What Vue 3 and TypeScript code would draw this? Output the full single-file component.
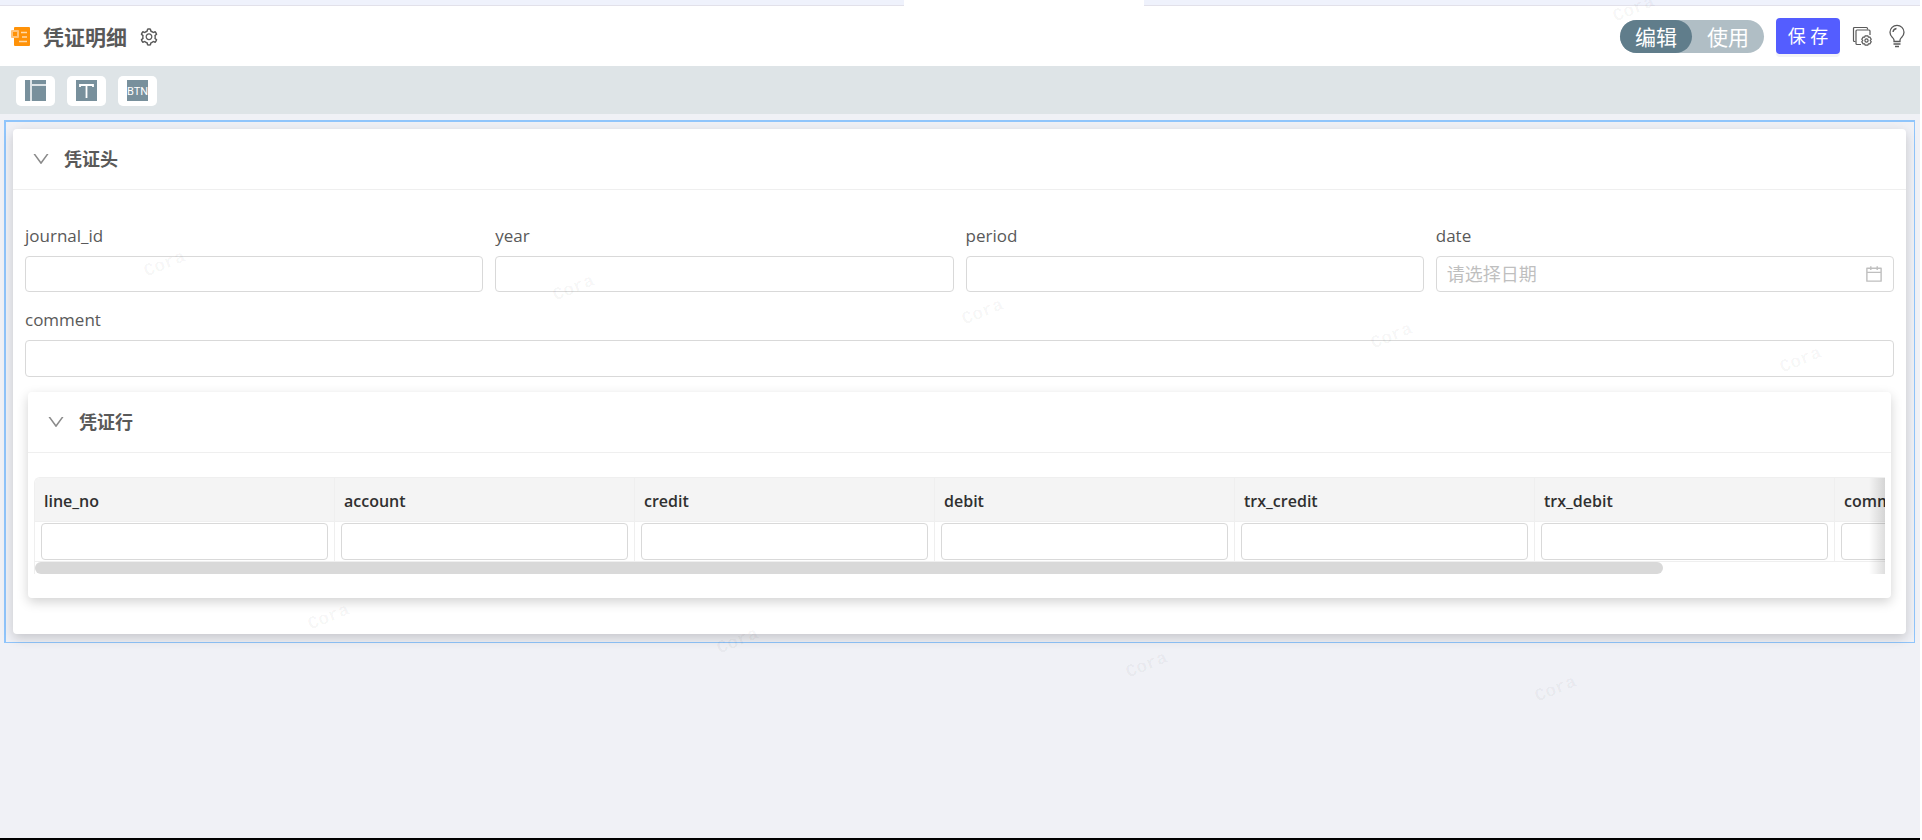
<script setup lang="ts">
import { ref } from 'vue'

interface Field {
  name: string
  kind: 'text' | 'date'
  wide?: boolean
}

interface Mark {
  left: number
  top: number
}

const fields: Field[] = [
  { name: 'journal_id', kind: 'text' },
  { name: 'year', kind: 'text' },
  { name: 'period', kind: 'text' },
  { name: 'date', kind: 'date' },
  { name: 'comment', kind: 'text', wide: true },
]

const columns: string[] = [
  'line_no',
  'account',
  'credit',
  'debit',
  'trx_credit',
  'trx_debit',
  'comment',
]

const mode = ref<'edit' | 'use'>('edit')

const markRow = (left: number, top: number, count: number): Mark[] =>
  Array.from({ length: count }, (_, i) => ({ left: left + i * 409, top: top + i * 24 }))

const marks: Mark[] = [
  ...markRow(1612, -1, 1),
  ...markRow(143, 254, 5),
  ...markRow(307, 607, 4),
]

const gearPath =
  'M924.8 625.7l-65.5-56c3.1-19 4.7-38.4 4.7-57.8s-1.6-38.8-4.7-57.8l65.5-56a32.03 32.03 0 009.3-35.2l-.9-2.6a443.74 443.74 0 00-79.7-137.9l-1.8-2.1a32.12 32.12 0 00-35.1-9.5l-81.3 28.9c-30-24.6-63.5-44-99.7-57.6l-15.7-85a32.05 32.05 0 00-25.8-25.7l-2.7-.5c-52.1-9.4-106.9-9.4-159 0l-2.7.5a32.05 32.05 0 00-25.8 25.7l-15.8 85.4a351.86 351.86 0 00-99 57.4l-81.9-29.1a32 32 0 00-35.1 9.5l-1.8 2.1a446.02 446.02 0 00-79.7 137.9l-.9 2.6c-4.5 12.5-.8 26.5 9.3 35.2l66.3 56.6c-3.1 18.8-4.6 38-4.6 57.1 0 19.2 1.5 38.4 4.6 57.1L99 625.5a32.03 32.03 0 00-9.3 35.2l.9 2.6c18.1 50.4 44.9 96.9 79.7 137.9l1.8 2.1a32.12 32.12 0 0035.1 9.5l81.9-29.1c29.8 24.5 63.1 43.9 99 57.4l15.8 85.4a32.05 32.05 0 0025.8 25.7l2.7.5a449.4 449.4 0 00159 0l2.7-.5a32.05 32.05 0 0025.8-25.7l15.7-85a350 350 0 0099.7-57.6l81.3 28.9a32 32 0 0035.1-9.5l1.8-2.1c34.8-41.1 61.6-87.5 79.7-137.9l.9-2.6c4.5-12.3.8-26.3-9.3-35zM788.3 465.9c2.5 15.1 3.8 30.6 3.8 46.1s-1.3 31-3.8 46.1l-6.6 40.1 74.7 63.9a370.03 370.03 0 01-42.6 73.6L721 702.8l-31.4 25.8c-23.9 19.6-50.5 35-79.3 45.8l-38.1 14.3-17.9 97a377.5 377.5 0 01-85 0l-17.9-97.2-37.8-14.5c-28.5-10.8-55-26.2-78.7-45.7l-31.4-25.9-93.4 33.2c-17-22.9-31.2-47.6-42.6-73.6l75.5-64.5-6.5-40c-2.4-14.9-3.7-30.3-3.7-45.5 0-15.3 1.2-30.6 3.7-45.5l6.5-40-75.5-64.5c11.3-26.1 25.6-50.7 42.6-73.6l93.4 33.2 31.4-25.9c23.7-19.5 50.2-34.9 78.7-45.7l37.9-14.3 17.9-97.2c28.1-3.2 56.8-3.2 85 0l17.9 97 38.1 14.3c28.7 10.8 55.4 26.2 79.3 45.8l31.4 25.8 92.8-32.9c17 22.9 31.2 47.6 42.6 73.6L781.8 426l6.5 39.9zM512 326c-97.2 0-176 78.8-176 176s78.8 176 176 176 176-78.8 176-176-78.8-176-176-176zm79.2 255.2A111.6 111.6 0 01512 614c-29.9 0-58-11.7-79.2-32.8A111.6 111.6 0 01400 502c0-29.9 11.7-58 32.8-79.2C454 401.6 482.1 390 512 390c29.9 0 58 11.6 79.2 32.8A111.6 111.6 0 01624 502c0 29.9-11.7 58-32.8 79.2z'
const downPath =
  'M884 256h-75c-5.1 0-9.9 2.5-12.9 6.6L512 654.2 227.9 262.6c-3-4.1-7.8-6.6-12.9-6.6h-75c-6.5 0-10.3 7.4-6.5 12.7l352.6 486.1c12.8 17.6 39 17.6 51.7 0l352.6-486.1c3.9-5.3.1-12.7-6.4-12.7z'
const calendarPath =
  'M880 184H712v-64c0-4.4-3.6-8-8-8h-56c-4.4 0-8 3.6-8 8v64H384v-64c0-4.4-3.6-8-8-8h-56c-4.4 0-8 3.6-8 8v64H144c-17.7 0-32 14.3-32 32v664c0 17.7 14.3 32 32 32h736c17.7 0 32-14.3 32-32V216c0-17.7-14.3-32-32-32zm-40 656H184V460h656v380zM184 392V256h128v48c0 4.4 3.6 8 8 8h56c4.4 0 8-3.6 8-8v-48h256v48c0 4.4 3.6 8 8 8h56c4.4 0 8-3.6 8-8v-48h128v136H184z'
</script>

<template>
  <div class="page">
    <div class="tabs"><span class="tab-active"></span></div>

    <header class="header">
      <svg class="doc-icon" viewBox="0 0 20 20" aria-hidden="true">
        <rect x="3" y="0" width="16" height="19" rx="1" fill="#ff9208" />
        <rect x="0" y="3" width="8" height="8" rx="1" fill="#ffc27a" />
        <rect x="2" y="5" width="4" height="4" fill="#ff9208" />
        <path d="M10 5.500h6M11 10h5M8 14.500h8" stroke="#ffd9a8" stroke-width="1.500" />
      </svg>
      <h1 class="title">凭证明细</h1>
      <button class="icon-btn" type="button" aria-label="设置">
        <svg class="icon" viewBox="0 0 1024 1024"><path :d="gearPath" fill="currentColor" /></svg>
      </button>

      <div class="actions">
        <div class="switch">
          <button type="button" :class="{ on: mode === 'edit' }" @click="mode = 'edit'">编辑</button>
          <button type="button" :class="{ on: mode === 'use' }" @click="mode = 'use'">使用</button>
        </div>
        <button class="save" type="button">保 存</button>
        <button class="icon-btn copy" type="button" aria-label="页面配置">
          <svg class="icon" viewBox="0 0 20 20" fill="none" stroke="currentColor" stroke-width="1.200">
            <path d="M3.500 15.500h-1a1 1 0 0 1-1-1V2.500a1 1 0 0 1 1-1h12a1 1 0 0 1 1 1v1" />
            <path d="M9 18.500H5a1 1 0 0 1-1-1V5a1 1 0 0 1 1-1h12a1 1 0 0 1 1 1v4" />
            <path d="M13.200 9.800h2.600l.6 1.400 1.500-.1 1.300 2.200-.9 1.200.9 1.200-1.300 2.200-1.500-.1-.6 1.400h-2.600l-.6-1.400-1.500.1-1.300-2.200.9-1.200-.9-1.200 1.300-2.200 1.500.1z" />
            <circle cx="14.500" cy="14.500" r="1.600" />
          </svg>
        </button>
        <button class="icon-btn" type="button" aria-label="提示">
          <svg class="bulb" viewBox="0 0 18 24" fill="none" stroke="currentColor" stroke-width="1.300">
            <path d="M6 17.500v-1.500c0-1-.7-1.700-1.600-2.600A6.700 6.700 0 0 1 2 8.300a7 7 0 0 1 14 0c0 2.200-1 3.800-2.400 5.100-.9.900-1.600 1.600-1.600 2.600v1.500z" />
            <path d="M5 8a4 4 0 0 1 3.500-3.500M5.500 20h7M7 22.500h4" />
          </svg>
        </button>
      </div>
    </header>

    <nav class="toolbar" aria-label="组件">
      <button class="tool" type="button" aria-label="布局">
        <svg class="tool-icon" viewBox="0 0 21 21">
          <rect width="21" height="21" fill="#78909c" />
          <path d="M6 0v21M7 5h14" stroke="#fff" stroke-width="1.500" />
        </svg>
      </button>
      <button class="tool" type="button" aria-label="文本">
        <svg class="tool-icon" viewBox="0 0 21 21">
          <rect width="21" height="21" fill="#78909c" />
          <path d="M4 7V5h13v2M10.500 5v13" stroke="#fff" stroke-width="1.800" fill="none" />
        </svg>
      </button>
      <button class="tool" type="button" aria-label="按钮">
        <svg class="tool-icon" viewBox="0 0 21 21">
          <rect width="21" height="21" fill="#78909c" />
          <text class="tool-text" x="10.500" y="15" text-anchor="middle">BTN</text>
        </svg>
      </button>
    </nav>

    <main class="canvas">
      <section class="card">
        <div class="card-head">
          <button class="fold" type="button" aria-label="收起">
            <svg class="icon" viewBox="0 0 1024 1024"><path :d="downPath" fill="currentColor" /></svg>
          </button>
          <h2>凭证头</h2>
        </div>

        <div class="card-body">
          <form class="form" @submit.prevent>
            <div v-for="f in fields" :key="f.name" class="field" :class="{ wide: f.wide }">
              <label :for="f.name">{{ f.name }}</label>
              <div class="control">
                <input
                  :id="f.name"
                  class="box"
                  type="text"
                  autocomplete="off"
                  :placeholder="f.kind === 'date' ? '请选择日期' : undefined"
                />
                <svg v-if="f.kind === 'date'" class="icon calendar" viewBox="0 0 1024 1024" aria-hidden="true">
                  <path :d="calendarPath" fill="currentColor" />
                </svg>
              </div>
            </div>
          </form>

          <section class="card inner">
            <div class="card-head">
              <button class="fold" type="button" aria-label="收起">
                <svg class="icon" viewBox="0 0 1024 1024"><path :d="downPath" fill="currentColor" /></svg>
              </button>
              <h2>凭证行</h2>
            </div>
            <div class="grid-wrap">
              <div class="grid">
                <table>
                  <thead>
                    <tr>
                      <th v-for="c in columns" :key="c" scope="col">{{ c }}</th>
                    </tr>
                  </thead>
                  <tbody>
                    <tr>
                      <td v-for="c in columns" :key="c">
                        <input class="box" type="text" :aria-label="c" />
                      </td>
                    </tr>
                  </tbody>
                </table>
                <div class="scroll"><div class="thumb"></div></div>
              </div>
            </div>
          </section>
        </div>
      </section>
    </main>

    <div class="marks" aria-hidden="true">
      <span
        v-for="(m, i) in marks"
        :key="i"
        class="mark"
        :style="{ left: m.left + 'px', top: m.top + 'px' }"
      >Cora</span>
    </div>
  </div>
</template>

<style>
body {
  margin: 0;
  background: #fff;
}
</style>

<style scoped>
.page {
  position: relative;
  display: flex;
  flex-direction: column;
  box-sizing: border-box;
  min-height: 100vh;
  margin-right: 2px;
  border-bottom: 2px solid #000;
  background: #f0f1f6;
  color: #595959;
  font-family: "Open Sans", "Noto Sans CJK SC", sans-serif;
  font-size: 17px;
  line-height: 24px;
}

.page *,
.page *::before,
.page *::after {
  box-sizing: border-box;
}

button {
  margin: 0;
  padding: 0;
  border: 0;
  background: none;
  color: inherit;
  font: inherit;
  cursor: pointer;
}

.icon {
  display: block;
  width: 20px;
  height: 20px;
}

.tabs {
  display: flex;
  height: 6px;
  border-bottom: 1px solid #e2e1ea;
  background: #eff2fc;
}

.tab-active {
  width: 240px;
  height: 6px;
  margin-left: 904px;
  background: #fff;
}

.header {
  display: flex;
  align-items: center;
  height: 60px;
  padding: 2px 14px 0 11px;
  background: #fff;
}

.doc-icon {
  width: 20px;
  height: 20px;
}

.title {
  margin: 0 12px;
  font-size: 21px;
  font-weight: 700;
  line-height: 32px;
}

.actions {
  display: flex;
  align-items: center;
  height: 36px;
  margin: 0 0 2px auto;
}

.switch {
  display: flex;
  width: 144px;
  height: 33px;
  margin-right: 12px;
  border-radius: 17px;
  background: #b0bec5;
}

.switch button {
  flex: 1;
  border-radius: 17px;
  color: #fff;
  font-size: 21px;
  line-height: 35px;
}

.switch .on {
  background: #607d8b;
}

.save {
  width: 64px;
  height: 36px;
  margin-right: 12px;
  border-radius: 4px;
  background: #545dff;
  box-shadow: 0 3px 0 #f3f3f7;
  color: #fff;
  font-size: 18px;
}

.copy {
  margin-right: 16px;
}

.bulb {
  display: block;
  width: 18px;
  height: 24px;
}

.toolbar {
  display: flex;
  align-items: center;
  gap: 12px;
  height: 48px;
  padding: 1px 16px 0;
  background: #dee4e7;
}

.tool {
  display: grid;
  place-items: center;
  width: 39px;
  height: 30px;
  border-radius: 5px;
  background: #fff;
}

.tool-icon {
  display: block;
  width: 21px;
  height: 21px;
}

.tool-text {
  fill: #fff;
  font-family: Roboto, sans-serif;
  font-size: 11px;
}

.canvas {
  margin: 6px 5px 0 4px;
  padding: 7px 8px 8px 7px;
  border: solid #90c5fb;
  border-width: 2px 1px 1px 2px;
}

.card {
  border-radius: 4px;
  background: #fff;
  box-shadow: 0 4px 12px rgba(0, 0, 0, 0.18);
}

.card-head {
  display: flex;
  align-items: center;
  gap: 12px;
  height: 61px;
  padding: 0 18px;
  border-bottom: 1px solid #efefef;
}

.card-head h2 {
  margin: 0;
  font-size: 18px;
  font-weight: 700;
  line-height: 28px;
}

.fold {
  padding-right: 1px;
  color: #8a8a8a;
}

.card-body {
  padding: 30px 12px 36px;
}

.form {
  display: grid;
  grid-template-columns: repeat(4, 1fr);
  gap: 12px;
}

.field.wide {
  grid-column: 1 / -1;
}

.field label {
  display: block;
  height: 36px;
  line-height: 32px;
}

.control {
  position: relative;
}

.box {
  display: block;
  width: 100%;
  height: 36px;
  padding: 0 10px;
  border: 1px solid #d9d9d9;
  border-radius: 4px;
  outline: none;
  background: #fff;
  color: #555;
  font: inherit;
}

.wide .box,
td .box {
  height: 37px;
}

.box::placeholder {
  color: #bfbfbf;
  font-size: 18px;
  opacity: 1;
}

.calendar {
  position: absolute;
  top: 8px;
  right: 10px;
  color: #bfbfbf;
}

.inner {
  margin: 15px 3px 0;
}

.grid-wrap {
  padding: 24px 6px;
}

.grid {
  position: relative;
  overflow: hidden;
  border: solid #efefef;
  border-width: 1px 0 0 1px;
  border-radius: 6px 0 0 0;
}

.grid::after {
  position: absolute;
  inset: -1px 0 0 auto;
  width: 16px;
  background: linear-gradient(to left, rgba(0, 0, 0, 0.13), rgba(0, 0, 0, 0));
  content: "";
}

table {
  width: 2100px;
  table-layout: fixed;
  border-collapse: separate;
  border-spacing: 0;
}

th {
  height: 44px;
  padding: 3px 9px 0;
  border-right: 1px solid #efefef;
  border-bottom: 1px solid #efefef;
  background: #f4f4f4;
  color: #303030;
  font-size: 16px;
  font-weight: 600;
  text-align: left;
}

td {
  height: 40px;
  padding: 1px 6px;
  border-right: 1px solid #efefef;
  border-bottom: 1px solid #efefef;
}

.scroll {
  height: 12px;
}

.thumb {
  width: 88%;
  height: 12px;
  border-radius: 6px;
  background: #d9d9d9;
}

.marks {
  position: absolute;
  inset: 0;
  overflow: hidden;
  pointer-events: none;
}

.mark {
  position: absolute;
  color: rgba(0, 0, 0, 0.04);
  font-family: "Liberation Mono", monospace;
  font-size: 18px;
  font-weight: 700;
  line-height: 20px;
  transform: rotate(-22deg);
}
</style>
